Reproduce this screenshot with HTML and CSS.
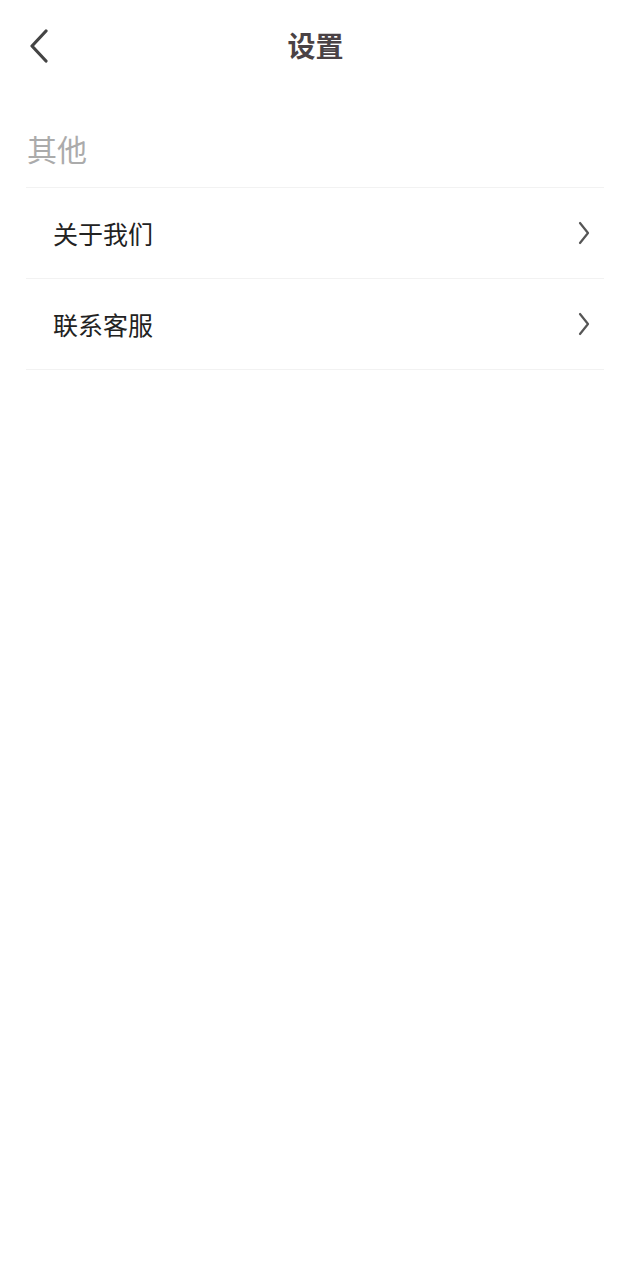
FILE: index.html
```html
<!DOCTYPE html>
<html lang="zh-CN">
<head>
<meta charset="utf-8">
<title>设置</title>
<link rel="stylesheet" href="styles.css">
</head>
<body>
<div class="page">
  <header class="topbar">
    <span class="back">
      <svg width="20" height="34" viewBox="0 0 20 34"><path d="M17 2 L3 17 L17 32" fill="none" stroke="#444" stroke-width="3.2" stroke-linecap="round" stroke-linejoin="round"/></svg>
    </span>
    <h1 class="title">设置</h1>
  </header>
  <section class="group">
    <div class="group-label">其他</div>
    <ul class="list">
      <li class="row"><span class="row-text">关于我们</span>
        <svg class="chev" width="14" height="24" viewBox="0 0 14 24"><path d="M3 2 L11 12 L3 22" fill="none" stroke="#555" stroke-width="2.2" stroke-linecap="round" stroke-linejoin="round"/></svg>
      </li>
      <li class="row"><span class="row-text">联系客服</span>
        <svg class="chev" width="14" height="24" viewBox="0 0 14 24"><path d="M3 2 L11 12 L3 22" fill="none" stroke="#555" stroke-width="2.2" stroke-linecap="round" stroke-linejoin="round"/></svg>
      </li>
    </ul>
  </section>
</div>
</body>
</html>
```
FILE: styles.css
```css
* { box-sizing: border-box; }
html, body { margin: 0; padding: 0; background: #fff; }
body {
  font-family: "Noto Sans CJK SC", "Noto Sans", sans-serif;
  color: #222;
}
.page { width: 630px; min-height: 1280px; }
.topbar {
  position: relative;
  height: 94px;
  display: flex;
  align-items: center;
  justify-content: center;
}
.back {
  position: absolute;
  left: 29px;
  top: 29px;
  display: block;
  width: 20px;
  height: 34px;
}
.back svg { display: block; }
.title {
  margin: -4px 0 0 1px;
  font-size: 28px;
  font-weight: 700;
  line-height: 28px;
  color: #4a4245;
}
.group { padding: 0 26px; }
.group-label {
  margin-top: 39px;
  font-size: 30px;
  line-height: 30px;
  color: #ababab;
  padding-left: 1px;
  padding-bottom: 24px;
}
.list { list-style: none; margin: 0; padding: 0; border-top: 1px solid #f2f2f2; }
.row {
  height: 91px;
  display: flex;
  align-items: center;
  justify-content: space-between;
  padding: 0 13px 0 27px;
  border-bottom: 1px solid #f2f2f2;
}
.row-text {
  font-size: 25px;
  line-height: 25px;
  color: #222;
}
.chev { display: block; }
```
